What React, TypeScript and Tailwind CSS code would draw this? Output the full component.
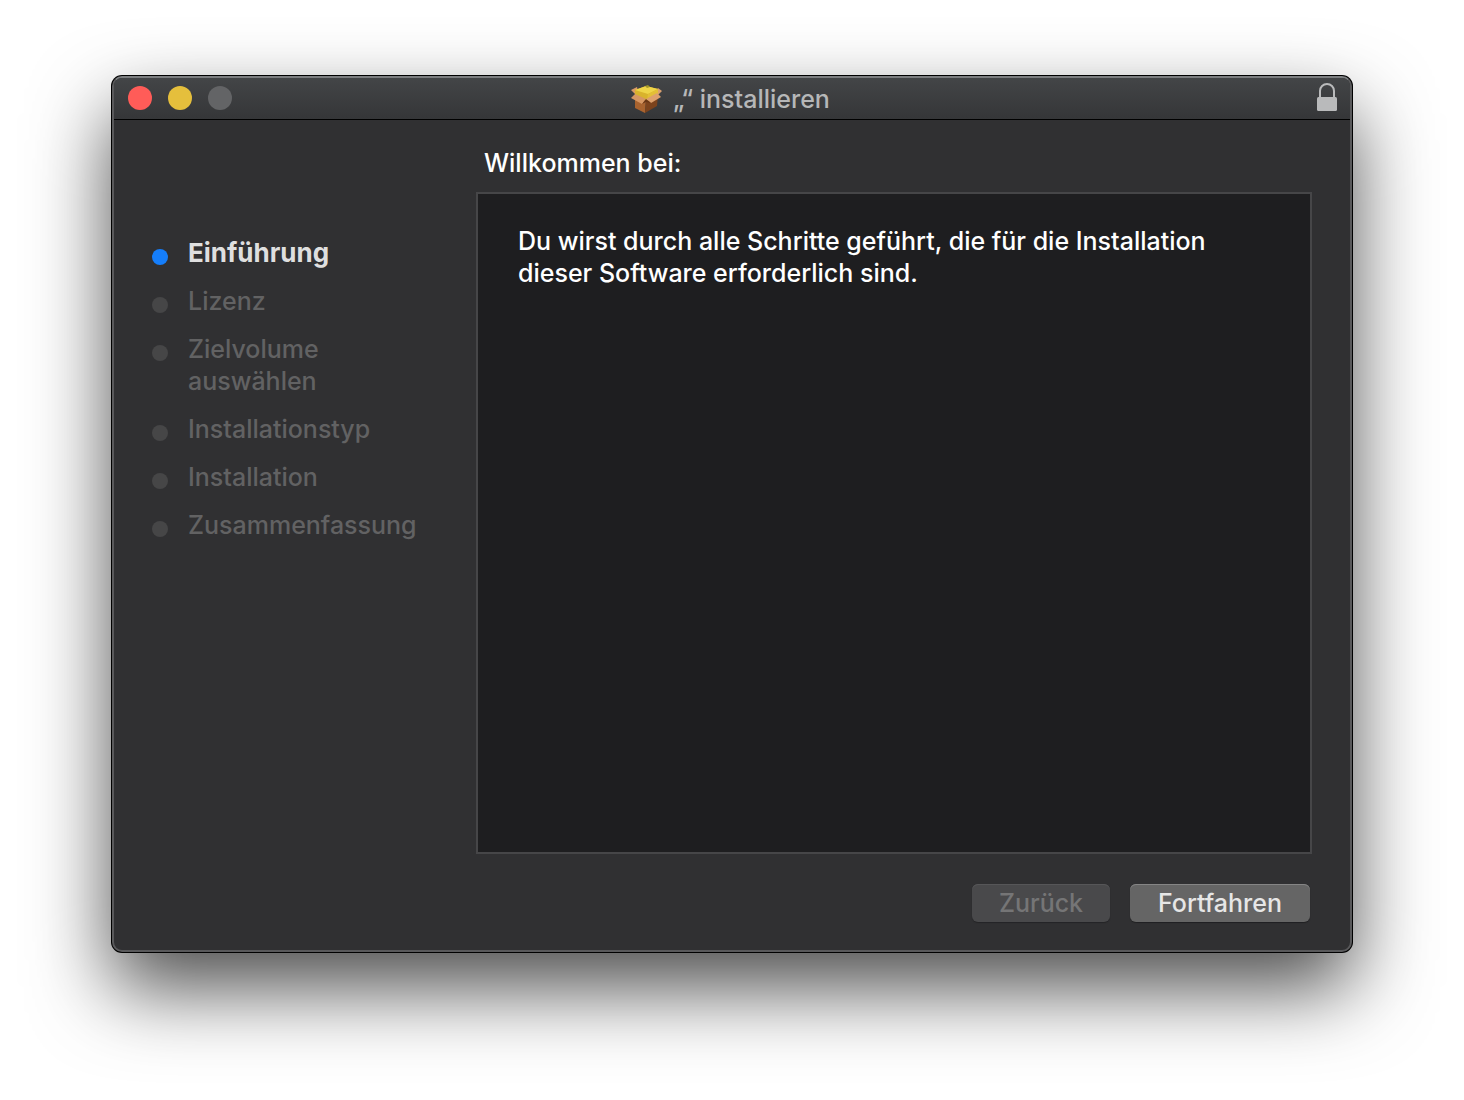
const steps = [
  { label: 'Einführung', active: true },
  { label: 'Lizenz' },
  { label: 'Zielvolume auswählen' },
  { label: 'Installationstyp' },
  { label: 'Installation' },
  { label: 'Zusammenfassung' },
]

const PackageIcon = () => (
  <svg viewBox="0 0 32 32" className="size-8" aria-hidden="true">
    <path d="M4 12 15 17 14 30 4 25Z" fill="#a8632f" />
    <path d="M15 17 27 12 26 23 14 30Z" fill="#7c431d" />
    <path d="M0 7 6 4 7 8 4 11Z" fill="#d99a66" />
    <path d="M27 5 31 8 27 12 24 9Z" fill="#d9a06f" />
    <path d="M4 7 15 3 27 6 27 12 16 18 4 13Z" fill="#d9b32c" />
    <path d="M4 7 15 3 27 6 17 11Z" fill="#efd548" />
    <path d="M17 11 27 6V12L16 17Z" fill="#e3bf35" />
    <path d="M14 3 17 2 19 4 16 5Z" fill="#a2962c" />
    <path d="M4 11 15 16 11 21 0 15Z" fill="#d69763" />
    <path d="M15 16 26 10 30 14 20 20Z" fill="#dda06d" />
    <path d="M11 21 15 16 20 20 15 19Z" fill="#6a3716" />
  </svg>
)

const LockIcon = () => (
  <svg
    viewBox="0 0 20 28"
    className="h-7 w-5"
    role="img"
    aria-label="Geschützt"
  >
    <path
      d="M3 15V8a7 7 0 0 1 14 0v7"
      fill="none"
      stroke="#b9babb"
      strokeWidth="2"
    />
    <rect y="14" width="20" height="14" rx="1.5" fill="#b9babb" />
  </svg>
)

const TitleBar = () => (
  <header className="grid h-[42px] grid-cols-[1fr_auto_1fr] items-center border-b border-black bg-linear-to-b from-[#434547] to-[#353638] pr-[13px] pl-3.5">
    <div className="flex gap-4 pb-0.5">
      <button
        type="button"
        aria-label="Schließen"
        className="size-6 rounded-full bg-[#ff5c58]"
      />
      <button
        type="button"
        aria-label="Minimieren"
        className="size-6 rounded-full bg-[#e5bf3c]"
      />
      <button
        type="button"
        aria-label="Vergrößern"
        disabled
        className="size-6 rounded-full bg-[#636466]"
      />
    </div>
    <div className="flex items-center gap-2.5 pr-1">
      <PackageIcon />
      <h1 className="text-[25px] leading-8 font-medium text-[#b6b7b8]">
        „“ installieren
      </h1>
    </div>
    <div className="flex justify-end pb-1">
      <LockIcon />
    </div>
  </header>
)

const Sidebar = () => (
  <nav aria-label="Schritte" className="w-[362px] shrink-0 pt-[117px] pl-[38px]">
    <ol className="flex w-[270px] flex-col gap-4">
      {steps.map(({ label, active }) => (
        <li
          key={label}
          aria-current={active ? 'step' : undefined}
          className={
            active
              ? 'flex gap-5 text-[26px] leading-8 font-bold text-[#dfdfdf]'
              : 'flex gap-5 text-[25px] leading-8 font-medium text-[#626263]'
          }
        >
          <span
            className={
              active
                ? 'mt-3 size-4 shrink-0 rounded-full bg-[#157efb]'
                : 'mt-3 size-4 shrink-0 rounded-full bg-[#464647]'
            }
          />
          <span>{label}</span>
        </li>
      ))}
    </ol>
  </nav>
)

export default function App() {
  return (
    <div className="flex min-h-screen bg-white px-28 pt-[76px] pb-[148px] font-['Inter',sans-serif]">
      <div className="flex flex-1 flex-col overflow-hidden rounded-[10px] border-2 border-[#59595b] border-t-[#7c7e80] bg-[#303032] shadow-[0_0_0_1px_#000,0_36px_80px_rgba(0,0,0,0.7)]">
        <TitleBar />
        <div className="flex flex-1">
          <Sidebar />
          <main className="flex flex-1 flex-col pt-[27px] pr-[38px] pb-7">
            <h2 className="pl-2 text-[25px] leading-8 font-medium text-white">
              Willkommen bei:
            </h2>
            <section className="mt-[13px] flex-1 border-2 border-[#464648] bg-[#1e1e20] px-10 pt-[31px]">
              <p className="text-[25px] leading-8 font-medium text-white">
                Du wirst durch alle Schritte geführt, die für die Installation
                dieser Software erforderlich sind.
              </p>
            </section>
            <div className="mt-[30px] flex justify-end gap-5 pr-0.5">
              <button
                type="button"
                disabled
                className="h-[38px] w-[138px] rounded-md bg-[#49494b] text-[25px] leading-8 font-medium text-[#757576] shadow-[inset_0_1px_0_#565658,0_1px_1px_#242426]"
              >
                Zurück
              </button>
              <button
                type="button"
                className="h-[38px] w-[180px] rounded-md bg-[#656565] text-[25px] leading-8 font-medium text-[#e6e6e6] shadow-[inset_0_1px_0_#858585,0_1px_1px_#202022]"
              >
                Fortfahren
              </button>
            </div>
          </main>
        </div>
      </div>
    </div>
  )
}
